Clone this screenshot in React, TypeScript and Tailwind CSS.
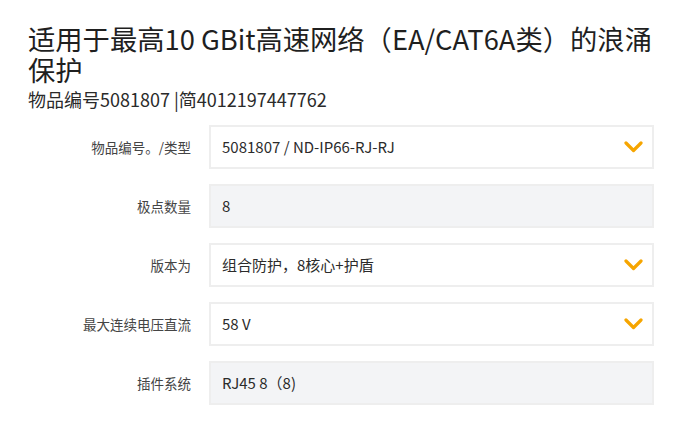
import React from 'react';

const rows = [
  { label: '物品编号。/类型', value: '5081807 / ND-IP66-RJ-RJ', select: true },
  { label: '极点数量', value: '8', select: false },
  { label: '版本为', value: '组合防护，8核心+护盾', select: true },
  { label: '最大连续电压直流', value: '58 V', select: true },
  { label: '插件系统', value: 'RJ45 8（8)', select: false },
];

function Chevron() {
  return (
    <svg width="19" height="12" viewBox="0 0 19 12" className="shrink-0">
      <polyline points="2,2 9.5,9.5 17,2" fill="none" stroke="#f6a500" strokeWidth="3.2" strokeLinecap="round" strokeLinejoin="round" />
    </svg>
  );
}

export default function App() {
  return (
    <div className="w-[695px] h-[437px] bg-white pt-[23px] pl-7 text-[#222]" style={{ fontFamily: '"Noto Sans CJK SC", sans-serif' }}>
      {/* Title */}
      <h1 className="w-[630px] text-[27.3px] leading-[31px] font-normal text-[#1f1f1f]">
        适用于最高10 GBit高速网络（EA/CAT6A类）的浪涌保护
      </h1>
      <p className="mt-[3px] text-[18px] leading-[22px] text-[#2a2a2a]">物品编号5081807 |简4012197447762</p>

      {/* Spec form */}
      <div className="mt-[15px] flex flex-col gap-[15px]">
        {rows.map((row) => (
          <div key={row.label} className="flex items-center">
            <div className="w-[163px] text-right text-[13.5px] text-[#444]">{row.label}</div>
            <div
              className={`ml-[18px] w-[445px] h-[44px] border-2 border-[#eeeeee] flex items-center justify-between pl-[11px] pr-[9px] text-[15px] text-[#2b2b2b] ${row.select ? 'bg-white' : 'bg-[#f3f4f6]'}`}
            >
              <span>{row.value}</span>
              {row.select && <Chevron />}
            </div>
          </div>
        ))}
      </div>
    </div>
  );
}
